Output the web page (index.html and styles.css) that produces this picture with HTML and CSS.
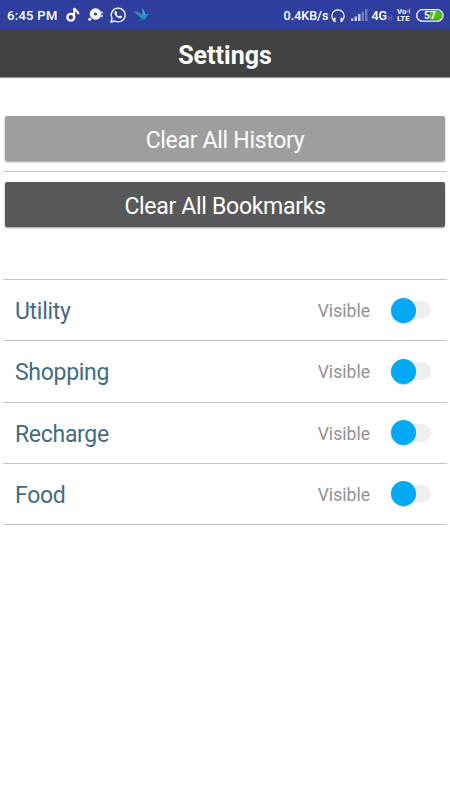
FILE: index.html
```html
<!DOCTYPE html>
<html lang="en">
<head>
  <meta charset="UTF-8">
  <meta name="viewport" content="width=device-width, initial-scale=1.0">
  <title>Settings</title>
  <link rel="stylesheet" href="styles.css">
</head>
<body>

<!-- Status bar -->
<div class="status-bar">
  <span class="time">6:45 PM</span>
  <svg class="icon-note" width="14" height="16" viewBox="0 0 14 16">
    <circle cx="4.800" cy="10.200" r="3.400" fill="none" stroke="#fff" stroke-width="2.300"/>
    <path d="M8.200 10.500V1c.5 2.500 4 2.600 4.200 6.300" fill="none" stroke="#fff" stroke-width="2"/>
  </svg>
  <svg class="icon-disc" width="16" height="14" viewBox="0 0 16 14">
    <circle cx="7.500" cy="6" r="3.700" fill="none" stroke="#fff" stroke-width="4.200"/>
    <circle cx="1.700" cy="11.300" r="1.500" fill="#fff"/>
    <path d="M12.500 3.500H15v2.200h-2.500zM12.500 7H15v2.200h-2.500z" fill="#b9c0e4"/>
  </svg>
  <svg class="icon-whatsapp" width="16" height="16" viewBox="0 0 16 16">
    <path d="M1 15l1.100-3.800A6.900 6.900 0 1 1 4.800 14z" fill="none" stroke="#fff" stroke-width="1.300"/>
    <path d="M5.300 4.100l1-.1.900 2-.8 1c.7 1.200 1.500 1.900 2.700 2.400l1-1 1.900 1c0 1.500-1.300 2-2.400 1.800C6.900 10.700 4.900 8.500 4.400 6.200c0-.9.300-1.600.9-2.100z" fill="#fff"/>
  </svg>
  <svg class="icon-bird" width="18" height="16" viewBox="0 0 18 16">
    <path d="M0 4.500l4.500.2L9 7.500 9.500 1l3 6.500 4.500-1-3.700 3.300-2 3.200L5.500 14l3-3z" fill="#2492ca"/>
    <path d="M0 4.500l4.500.2L9 7.500l.5 2z" fill="#5d7890"/>
    <path d="M9.500 1l1 7.500 2-1z" fill="#3fb4e0"/>
    <path d="M8.500 11l2.800 2-5.800 1z" fill="#256489"/>
  </svg>

  <span class="speed">0.4KB/s</span>
  <svg class="icon-headset" width="14" height="14" viewBox="0 0 14 14">
    <path d="M3.500 12C1.300 10.500.8 8.800.8 7a6.200 6.200 0 0 1 12.400 0c0 1.800-.5 3.500-2.700 5" fill="none" stroke="#fff" stroke-width="1.200"/>
    <path d="M2.500 9L4.500 8.500V13.500l-2-1zM11.500 9l-2-.5v5l2-1z" fill="#fff"/>
  </svg>
  <svg class="icon-signal" width="17" height="12" viewBox="0 0 17 12">
    <path d="M0 9.500h2.500V12H0zM3.500 7.500H6V12H3.500zM7 5h2.500v7H7z" fill="#c5cbea"/>
    <path d="M10.500 2.500H13V12h-2.500zM14 0h2.500v12H14z" fill="#6f7abf"/>
  </svg>
  <span class="network">4G</span>
  <svg class="icon-data" width="5" height="6" viewBox="0 0 5 6">
    <path d="M1.200 6V1.500M3.700 0v4.500M.2 2.500l1-1M4.700 3.500l-1 1" fill="none" stroke="#7f89c7" stroke-width=".8"/>
  </svg>
  <svg class="icon-volte" width="14" height="14" viewBox="0 0 14 14">
    <text transform="translate(0 5.700) scale(1.350 1.200)">Vo</text>
    <path d="M11 1.800v3M12.700.8v5" stroke="#c5cbea" stroke-width=".9"/>
    <text transform="translate(0 13) scale(1.350 1.250)">LTE</text>
  </svg>
  <svg class="icon-battery" width="28" height="13" viewBox="0 0 28 13">
    <path d="M14 1.700h7.500a4.800 4.800 0 0 1 3.500 8l-1 1.100H14z" fill="#46c312"/>
    <rect x=".7" y=".7" width="26.300" height="11.400" rx="5.700" fill="none" stroke="#fff" stroke-width="1.300"/>
    <text x="14" y="10.200" text-anchor="middle">57</text>
  </svg>
</div>

<header class="toolbar">Settings</header>

<div class="actions">
  <button class="btn btn-history">Clear All History</button>
  <hr>
  <button class="btn btn-bookmarks">Clear All Bookmarks</button>
</div>

<div class="categories">
  <div class="row">
    <span class="name">Utility</span>
    <span class="state">Visible</span>
    <span class="switch"><span class="thumb"></span></span>
  </div>
  <div class="row">
    <span class="name">Shopping</span>
    <span class="state">Visible</span>
    <span class="switch"><span class="thumb"></span></span>
  </div>
  <div class="row">
    <span class="name">Recharge</span>
    <span class="state">Visible</span>
    <span class="switch"><span class="thumb"></span></span>
  </div>
  <div class="row">
    <span class="name">Food</span>
    <span class="state">Visible</span>
    <span class="switch"><span class="thumb"></span></span>
  </div>
</div>

</body>
</html>
```
FILE: styles.css
```css
body {
  font-family: Roboto, sans-serif;
  background-color: #fff;
  margin: 0;
  padding: 0;
}

.status-bar {
  display: flex;
  align-items: center;
  height: 30px;
  box-sizing: border-box;
  padding: 0 6px 0 7px;
  background-color: #303f9f;
  color: #fff;
  font-size: 13px;
  font-weight: 500;
}

.status-bar svg,
.status-bar span {
  flex: none;
}

.time {
  width: 51px;
  letter-spacing: 0.3px;
}

.icon-note {
  margin-left: 8px;
}

.icon-disc {
  margin-left: 8px;
}

.icon-whatsapp {
  margin-left: 6px;
}

.icon-bird {
  margin-left: 7px;
}

.speed {
  margin-left: auto;
  font-size: 12.5px;
}

.icon-headset {
  margin-left: 3px;
  margin-top: 2px;
}

.icon-signal {
  margin-left: 6px;
}

.network {
  margin-left: 3px;
  font-size: 12.5px;
}

.icon-data {
  margin: 5px 0 0 1px;
}

.icon-volte {
  margin-left: 4px;
}

.icon-volte text {
  font-size: 5.8px;
  font-weight: 700;
  fill: #fff;
}

.icon-battery {
  margin-left: 5px;
}

.icon-battery text {
  font-size: 10.5px;
  font-weight: 700;
  fill: #fff;
}

.toolbar {
  height: 47px;
  line-height: 51px;
  background-color: #424242;
  color: #fff;
  font-size: 25px;
  font-weight: 700;
  text-align: center;
  box-shadow: 0 1px 1px rgba(0, 0, 0, 0.4);
}

.actions {
  padding: 39px 3px 0;
}

.actions hr {
  height: 1px;
  margin: 10px 0;
  border: none;
  background-color: #c8c8c8;
}

.btn {
  display: block;
  width: 440px;
  height: 45px;
  margin: 0 2px;
  padding: 4px 0 0;
  border: none;
  border-radius: 2px;
  color: #fff;
  font-family: inherit;
  font-size: 23px;
  letter-spacing: -0.3px;
  text-align: center;
  box-shadow: 0 1px 2px rgba(0, 0, 0, 0.4);
}

.btn-history {
  background-color: #9e9e9e;
}

.btn-bookmarks {
  background-color: #59595b;
}

.categories {
  margin: 52px 3px 0;
  border-top: 1px solid #c4c4c4;
}

.row {
  display: flex;
  align-items: center;
  box-sizing: border-box;
  height: 61.25px;
  padding: 0 16px 0 12px;
  border-bottom: 1px solid #c4c4c4;
}

.name {
  flex: 1;
  padding-top: 3px;
  color: #456b7e;
  font-size: 23px;
  letter-spacing: -0.3px;
}

.state {
  padding-top: 2px;
  color: #929292;
  font-size: 17.6px;
}

.switch {
  display: flex;
  align-items: center;
  width: 40px;
  height: 18px;
  margin-left: 21px;
  border-radius: 9px;
  background-color: #efefef;
}

.thumb {
  width: 25px;
  height: 25px;
  border-radius: 50%;
  background-color: #03a9f4;
  box-shadow: 0 1px 1px rgba(3, 130, 190, 0.3);
}
```
